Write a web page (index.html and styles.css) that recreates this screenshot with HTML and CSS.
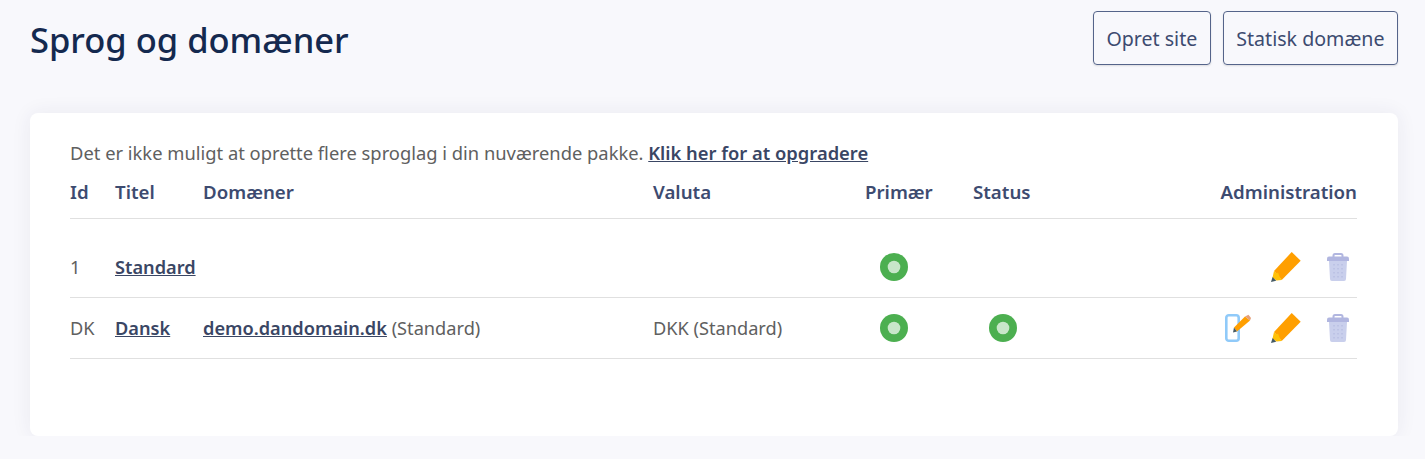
FILE: index.html
```html
<!DOCTYPE html>
<html lang="da">
<head>
  <meta charset="UTF-8" />
  <title>Sprog og domæner</title>
  <link rel="stylesheet" href="styles.css">
</head>
<body>
  <svg class="defs" width="0" height="0">
    <symbol id="pencil" viewBox="0 0 32 32">
      <path d="M21.7 1 L30.7 9.7 L11.7 29 L4 20 Z" fill="#ff9f00"/>
      <path d="M4 20 L6.5 22.5 L8 21.5 L9.5 25.5 L11.7 29 L6.5 29.5 L2.5 26.5 Z" fill="#ffc107"/>
      <path d="M1 31 L2.6 26 L6.2 29.7 Z" fill="#455a64"/>
    </symbol>
    <symbol id="trash" viewBox="0 0 22 28">
      <path d="M2 8 H20 L19 26 Q19 28 17 28 H5 Q3 28 3 26 Z" fill="#c9cfec"/>
      <path d="M7 11 V25 M11 11 V25 M15 11 V25" stroke="#b0b6dd" stroke-width="1" stroke-dasharray="1.5 2.5"/>
      <path d="M2 3.5 H20 Q22 3.5 22 5.5 V8 H0 V5.5 Q0 3.5 2 3.5 Z" fill="#b1b6e0"/>
      <path d="M6.5 4.5 V2.5 Q6.5 1 8 1 H14 Q15.5 1 15.5 2.5 V4.5" fill="none" stroke="#b1b6e0" stroke-width="2"/>
    </symbol>
    <symbol id="dot" viewBox="0 0 28 28">
      <circle cx="14" cy="14" r="14" fill="#4caf50"/>
      <circle cx="14" cy="14" r="6.3" fill="#c8e6c9"/>
    </symbol>
    <symbol id="page-edit" viewBox="0 0 26 28">
      <rect x="1.3" y="1.3" width="12.4" height="25.4" rx="2.5" fill="none" stroke="#90caf9" stroke-width="2.6"/>
      <path d="M20 2.5 L25 6.5 L12 17.5 L9 13.5 Z" fill="#ff9f00"/>
      <path d="M20 2.5 L23.5 .8 L26 4 L25 6.5 Z" fill="#e5a07a"/>
      <path d="M8 18.5 L9 13.5 L12 17.5 Z" fill="#455a64"/>
    </symbol>
  </svg>

  <div class="top">
    <h1>Sprog og domæner</h1>
    <div class="top-btns">
      <a class="btn" href="#">Opret site</a>
      <a class="btn" href="#">Statisk domæne</a>
    </div>
  </div>

  <div class="card">
    <p class="notice">Det er ikke muligt at oprette flere sproglag i din nuværende pakke. <a href="#">Klik her for at opgradere</a></p>
    <table>
      <thead>
        <tr>
          <th class="col-id">Id</th>
          <th class="col-title">Titel</th>
          <th class="col-domain">Domæner</th>
          <th class="col-currency">Valuta</th>
          <th class="col-primary">Primær</th>
          <th class="col-status">Status</th>
          <th class="col-admin">Administration</th>
        </tr>
      </thead>
      <tbody>
        <tr class="row-first">
          <td>1</td>
          <td><a href="#">Standard</a></td>
          <td></td>
          <td></td>
          <td class="primary"><svg class="dot"><use href="#dot"/></svg></td>
          <td></td>
          <td class="admin">
            <div class="actions">
              <svg class="pencil"><use href="#pencil"/></svg>
              <svg class="trash"><use href="#trash"/></svg>
            </div>
          </td>
        </tr>
        <tr>
          <td>DK</td>
          <td><a href="#">Dansk</a></td>
          <td><a href="#">demo.dandomain.dk</a> (Standard)</td>
          <td>DKK (Standard)</td>
          <td class="primary"><svg class="dot"><use href="#dot"/></svg></td>
          <td class="status"><svg class="dot"><use href="#dot"/></svg></td>
          <td class="admin">
            <div class="actions">
              <svg class="page-edit"><use href="#page-edit"/></svg>
              <svg class="pencil"><use href="#pencil"/></svg>
              <svg class="trash"><use href="#trash"/></svg>
            </div>
          </td>
        </tr>
      </tbody>
    </table>
  </div>
</body>
</html>
```

FILE: styles.css
```css
body {
  margin: 0;
  padding: 11px 27px 0 30px;
  background: #f8f8fc;
  font-family: "Noto Sans", sans-serif;
  font-size: 18.2px;
  color: #606060;
}

.defs {
  position: absolute;
}

a {
  color: #3a4664;
}

.top {
  display: flex;
  justify-content: space-between;
  align-items: flex-start;
}

h1 {
  margin: 0;
  font-size: 34.5px;
  line-height: 58px;
  font-weight: 500;
  color: #14294f;
}

.top-btns {
  display: flex;
  gap: 12px;
}

.btn {
  display: block;
  padding: 2px 12.5px 0;
  line-height: 50px;
  border: 1px solid #55648a;
  border-radius: 4px;
  text-decoration: none;
  font-size: 19.6px;
  color: #3d4b70;
  box-shadow: 0 1px 2px rgba(0, 0, 0, 0.12);
}

.card {
  margin-top: 44px;
  height: 323px;
  box-sizing: border-box;
  padding: 27px 41px 0 40px;
  background: #fff;
  border-radius: 8px;
  box-shadow: 0 0 20px rgba(40, 40, 90, 0.07);
}

.notice {
  margin: 0;
  font-size: 18.35px;
  line-height: 26px;
}

.notice a {
  font-weight: 600;
}

table {
  width: 100%;
  table-layout: fixed;
  border-collapse: collapse;
}

th {
  height: 52px;
  padding: 0;
  box-sizing: border-box;
  text-align: left;
  font-size: 18.7px;
  font-weight: 600;
  color: #3d4b70;
  border-bottom: 1px solid #e0e0e0;
}

td {
  height: 60px;
  padding: 0;
  border-bottom: 1px solid #e0e0e0;
}

.row-first td {
  padding-top: 18px;
}

td a {
  font-weight: 600;
}

.col-id { width: 45px; }
.col-title { width: 88px; }
.col-domain { width: 450px; }
.col-currency { width: 212px; }
.col-primary { width: 108px; }
.col-status { width: 120px; }

.col-admin {
  text-align: right;
}

.primary {
  padding-left: 15px;
}

.status {
  padding-left: 16px;
}

.dot {
  display: block;
  width: 28px;
  height: 28px;
}

.actions {
  display: flex;
  justify-content: flex-end;
  align-items: center;
  padding-right: 8px;
}

.page-edit {
  width: 26px;
  height: 28px;
  margin-right: 19px;
}

.pencil {
  width: 32px;
  height: 32px;
  margin-right: 25px;
}

.trash {
  width: 22px;
  height: 28px;
}
```
